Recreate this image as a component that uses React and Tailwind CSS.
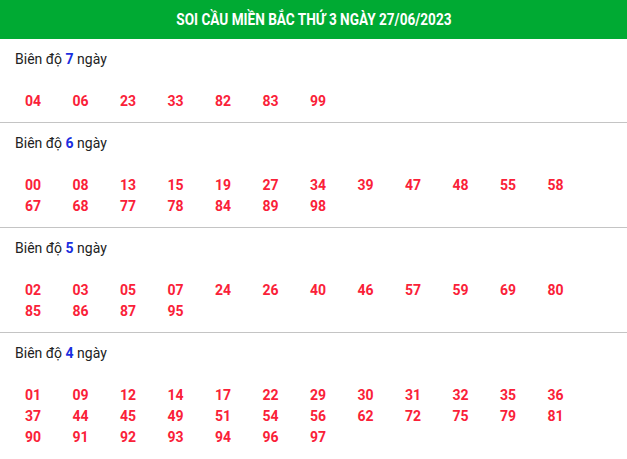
const sections = [
  { d: 7, nums: ["04","06","23","33","82","83","99"] },
  { d: 6, nums: ["00","08","13","15","19","27","34","39","47","48","55","58","67","68","77","78","84","89","98"] },
  { d: 5, nums: ["02","03","05","07","24","26","40","46","57","59","69","80","85","86","87","95"] },
  { d: 4, nums: ["01","09","12","14","17","22","29","30","31","32","35","36","37","44","45","49","51","54","56","62","72","75","79","81","90","91","92","93","94","96","97"] },
];

export default function App() {
  return (
    <div className="w-[627px] bg-white" style={{ fontFamily: "Roboto, 'Liberation Sans', sans-serif" }}>
      <div className="h-[39px] bg-[#00aa33] flex items-center justify-center">
        <span className="inline-block text-white font-bold text-[16px] leading-none scale-x-[0.85] whitespace-nowrap">
          SOI CẦU MIỀN BẮC THỨ 3 NGÀY 27/06/2023
        </span>
      </div>
      {sections.map((s, i) => (
        <div key={s.d} className={`${i < sections.length - 1 ? "border-b border-[#c4c4c4]" : ""} pt-[10px] pb-[10px]`}>
          <div className="pl-[15px] text-[14px] leading-[21px] text-[#222]">
            Biên độ <span className="font-bold text-[#1a2ee0]">{s.d}</span> ngày
          </div>
          <div className="mt-[21px] pl-[25px] flex flex-wrap w-[600px]">
            {s.nums.map((n) => (
              <span key={n} className="w-[47.5px] text-[14px] leading-[21px] font-bold text-[#fa2138]">{n}</span>
            ))}
          </div>
        </div>
      ))}
    </div>
  );
}
